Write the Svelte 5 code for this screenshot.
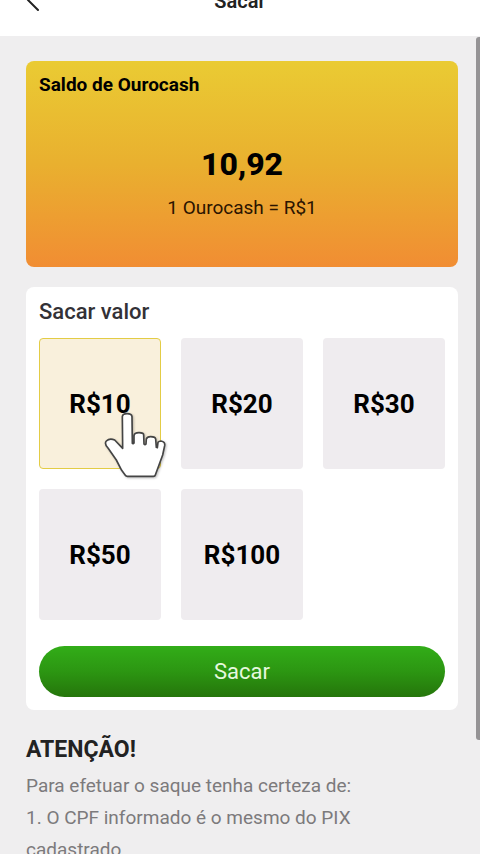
<script>
  const amounts = [10, 20, 30, 50, 100];
  let selected = $state(10);
</script>

<div class="screen">
  <header>
    <button class="back" aria-label="Voltar">
      <svg width="24" height="24" viewBox="0 0 24 24" fill="none" stroke="#222" stroke-width="2" stroke-linecap="round" stroke-linejoin="round">
        <path d="M14 -1L4 9Q3 10 4 11L14 21" />
      </svg>
    </button>
    <h1>Sacar</h1>
  </header>

  <main>
    <section class="balance">
      <h2>Saldo de Ourocash</h2>
      <strong>10,92</strong>
      <p>1 Ourocash = R$1</p>
    </section>

    <section class="panel">
      <h2>Sacar valor</h2>
      <div class="amounts">
        {#each amounts as amount}
          <button
            class="amount"
            class:selected={selected === amount}
            aria-pressed={selected === amount}
            onclick={() => (selected = amount)}
          >
            R${amount}
            {#if selected === amount}
              <svg class="hand" width="64" height="70" viewBox="42 30 192 210" aria-hidden="true">
                <path
                  d="M97 50Q98 41 111 41Q125 41 126 50L127 130Q129 133 132 129L132 107Q133 98 147 98Q161 98 161 105L162 132Q165 136 168 132L169 117Q171 110 182 110Q196 110 197 117L199 142L202 143L204 127Q207 123 213 123Q226 125 224 137L218 165L196 225Q195 229 190 229L112 229Q108 229 106 226L95 211L79 180L54 144Q42 131 49 123Q59 113 74 120L98 145Z"
                  fill="#fff" stroke="#444" stroke-width="5" stroke-linejoin="round"
                />
              </svg>
            {/if}
          </button>
        {/each}
      </div>
      <button class="submit">Sacar</button>
    </section>

    <section class="notice">
      <h2>ATENÇÃO!</h2>
      <p>Para efetuar o saque tenha certeza de:</p>
      <p>1. O CPF informado é o mesmo do PIX cadastrado</p>
    </section>
    <div class="scrollbar"></div>
  </main>
</div>

<style>
  :global(body) {
    background: #efeeef;
  }
  .screen {
    display: flex;
    flex-direction: column;
    height: 100vh;
    overflow: hidden;
    font-family: Roboto, "Liberation Sans", sans-serif;
    color: #000;
  }
  h1, h2, p {
    margin: 0;
  }
  button {
    font-family: inherit;
    border: 0;
    padding: 0;
    cursor: pointer;
  }
  header {
    flex: none;
    display: grid;
    grid-template-columns: 1fr auto 1fr;
    align-content: end;
    box-sizing: border-box;
    height: 36px;
    padding: 0 24px 23px;
    background: #fff;
    overflow: hidden;
  }
  .back {
    display: flex;
    width: 24px;
    background: none;
  }
  .back svg {
    overflow: visible;
  }
  h1 {
    font-size: 20px;
    line-height: 24px;
    font-weight: 600;
    color: #222;
  }
  main {
    position: relative;
    flex: 1;
    min-height: 0;
    display: flex;
    flex-direction: column;
    gap: 20px;
    padding: 25px 22px 0 26px;
  }
  .balance {
    display: flex;
    flex-direction: column;
    align-items: center;
    padding: 12px 13px 47px;
    border-radius: 8px;
    background: linear-gradient(#eacb33, #e9b02f 50%, #f18d33);
  }
  .balance h2 {
    align-self: flex-start;
    font-size: 19px;
    line-height: 24px;
    font-weight: 700;
  }
  .balance strong {
    margin-top: 47px;
    font-size: 32px;
    line-height: 40px;
    font-weight: 800;
  }
  .balance p {
    margin-top: 12px;
    font-size: 19px;
    line-height: 24px;
    color: #2b1400;
  }
  .panel {
    padding: 13px;
    border-radius: 8px;
    background: #fff;
  }
  .panel h2 {
    font-size: 22px;
    line-height: 24px;
    font-weight: 500;
    color: #333136;
  }
  .amounts {
    display: grid;
    grid-template-columns: repeat(3, 1fr);
    gap: 20px;
    margin-top: 14px;
  }
  .amount {
    position: relative;
    height: 131px;
    border: 1px solid transparent;
    border-radius: 4px;
    background: #efecef;
    font-size: 26px;
    line-height: 32px;
    font-weight: 700;
    color: #000;
  }
  .selected {
    border-color: #e3cc45;
    background: #f9f0dc;
  }
  .hand {
    position: absolute;
    left: 64px;
    top: 71px;
    z-index: 1;
    overflow: visible;
    filter: drop-shadow(1px 1px 1px rgba(0, 0, 0, 0.25));
  }
  .submit {
    display: block;
    width: 100%;
    height: 51px;
    margin-top: 26px;
    border-radius: 26px;
    background: linear-gradient(#32ad18, #2c9612 50%, #25750b);
    font-size: 22px;
    color: #e6f8df;
  }
  .notice {
    padding-top: 4px;
    font-size: 19px;
    line-height: 32px;
    color: #7c7a7c;
  }
  .notice h2 {
    margin-bottom: 4px;
    font-size: 23px;
    line-height: 32px;
    font-weight: 700;
    color: #222;
  }
  .notice p {
    max-width: 380px;
  }
  .scrollbar {
    position: absolute;
    top: 1px;
    right: 0;
    width: 4px;
    height: 86%;
    border-radius: 3px 0 0 3px;
    background: #959395;
  }
</style>
